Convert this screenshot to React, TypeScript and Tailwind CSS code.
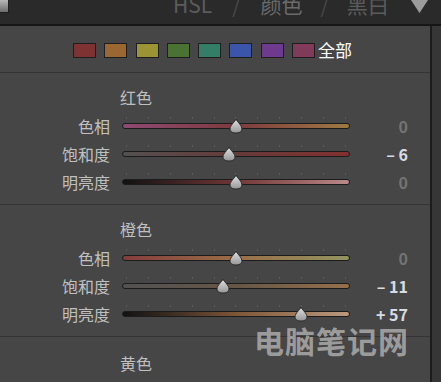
import React from "react";

type Row = { label: string; value: number; text: string; bright: boolean; track: string };

const swatches = [
  "bg-[#7e3232]",
  "bg-[#9c6632]",
  "bg-[#9a9434]",
  "bg-[#4a7232]",
  "bg-[#347e68]",
  "bg-[#3a55aa]",
  "bg-[#6e3a8e]",
  "bg-[#803a5a]",
];

const red: Row[] = [
  { label: "色相", value: 0, text: "0", bright: false, track: "from-[#8e4a72] via-[#7e3a3e] to-[#9c7a42]" },
  { label: "饱和度", value: -6, text: "– 6", bright: true, track: "from-[#545050] via-[#643a3a] to-[#82302f]" },
  { label: "明亮度", value: 0, text: "0", bright: false, track: "from-[#121212] via-[#723636] to-[#b88a8a]" },
];

const orange: Row[] = [
  { label: "色相", value: 0, text: "0", bright: false, track: "from-[#843c3c] via-[#9a6e46] to-[#929460]" },
  { label: "饱和度", value: -11, text: "– 11", bright: true, track: "from-[#525252] via-[#665646] to-[#96704c]" },
  { label: "明亮度", value: 57, text: "+ 57", bright: true, track: "from-[#121212] via-[#7e5638] to-[#bc9a7e]" },
];

function Thumb() {
  return (
    <svg width="16" height="16" viewBox="0 0 16 16">
      <defs>
        <linearGradient id="tg" x1="0" y1="0" x2="0" y2="1">
          <stop offset="0" stopColor="#e2e2e2" />
          <stop offset="1" stopColor="#969696" />
        </linearGradient>
      </defs>
      <path d="M8 1 C9 4 14 7 14 11 C14 14 11 15 8 15 C5 15 2 14 2 11 C2 7 7 4 8 1 Z" fill="url(#tg)" stroke="#2a2a2a" strokeWidth="1" />
    </svg>
  );
}

function Slider({ row }: { row: Row }) {
  const pct = ((row.value + 100) / 200) * 100;
  return (
    <div className="flex items-center h-[28px]">
      <div className="w-[110px] text-right text-[16px] text-[#c0c0c0]">{row.label}</div>
      <div className="relative ml-[12px] w-[228px] h-[16px] flex items-center">
        <div className="absolute left-[4px] right-[4px] top-[-1px] flex justify-between">
          {Array.from({ length: 11 }).map((_, i) => (
            <div key={i} className="w-[1px] h-[2px] bg-[#5a5a5a]" />
          ))}
        </div>
        <div className={`w-full h-[6px] rounded-full border border-[#1c1c1c] bg-linear-to-r ${row.track}`} />
        <div className="absolute top-0 -ml-[8px]" style={{ left: `${pct}%` }}>
          <Thumb />
        </div>
      </div>
      <div className={`w-[58px] text-right text-[16px] font-bold ${row.bright ? "text-[#d8dce2]" : "text-[#747474]"}`}>
        {row.text}
      </div>
    </div>
  );
}

function Section({ title, rows }: { title: string; rows: Row[] }) {
  return (
    <div className="border-t border-[#343434] pt-[14px] pb-[8px]">
      <div className="pl-[120px] h-[20px] leading-[20px] text-[16px] text-[#c0c0c0]">{title}</div>
      <div className="mt-[5px]">
        {rows.map((r) => (
          <Slider key={r.label} row={r} />
        ))}
      </div>
    </div>
  );
}

export default function App() {
  return (
    <div className="relative w-[441px] h-[382px] overflow-hidden bg-[#2a2a2a] font-['Noto_Sans_CJK_SC',sans-serif]">
      {/* top bar */}
      <div className="flex h-[24px] items-start">
        <div className="w-[9px] h-[13px] bg-linear-to-b from-[#b8b8b8] to-[#6c6c6c] border-r border-b border-[#1e1e1e]" />
        <div className="ml-[164px] -mt-[10px] flex text-[21px] leading-[28px] text-[#5c5c5c]">
          <span>HSL</span>
          <span className="ml-[20px] text-[#484848]">/</span>
          <span className="ml-[20px] text-[#6a6a6a]">颜色</span>
          <span className="ml-[18px] text-[#484848]">/</span>
          <span className="ml-[18px]">黑白</span>
        </div>
        <svg className="ml-[22px]" width="17" height="13" viewBox="0 0 17 13">
          <path d="M0 0 H17 L8.5 13 Z" fill="#9c9c9c" />
        </svg>
      </div>
      <div className="h-[2px] bg-[#161616]" />

      <div className="flex">
        <div className="w-[430px] bg-[#464646]">
          {/* colour picker */}
          <div className="h-[46px] flex items-center pl-[73px] pt-[2px]">
            <div className="flex gap-[8.3px]">
              {swatches.map((s) => (
                <div key={s} className={`w-[23px] h-[15px] border border-[#1e1e1e] ${s}`} />
              ))}
            </div>
            <span className="ml-[3px] text-[17px] leading-[20px] text-white">全部</span>
          </div>
          <Section title="红色" rows={red} />
          <Section title="橙色" rows={orange} />
          <div className="border-t border-[#343434] pt-[16px] h-[60px]">
            <div className="pl-[120px] h-[20px] leading-[20px] text-[16px] text-[#c0c0c0]">黄色</div>
          </div>
        </div>
        <div className="w-[2px] bg-[#1c1c1c]" />
        <div className="flex-1 bg-[#363636]" />
      </div>

      {/* watermark */}
      <div className="absolute left-[254px] top-[321px] text-[30px] leading-[38px] font-bold text-[#b4b4b4]/80 tracking-[1px]">
        电脑笔记网
      </div>
    </div>
  );
}
